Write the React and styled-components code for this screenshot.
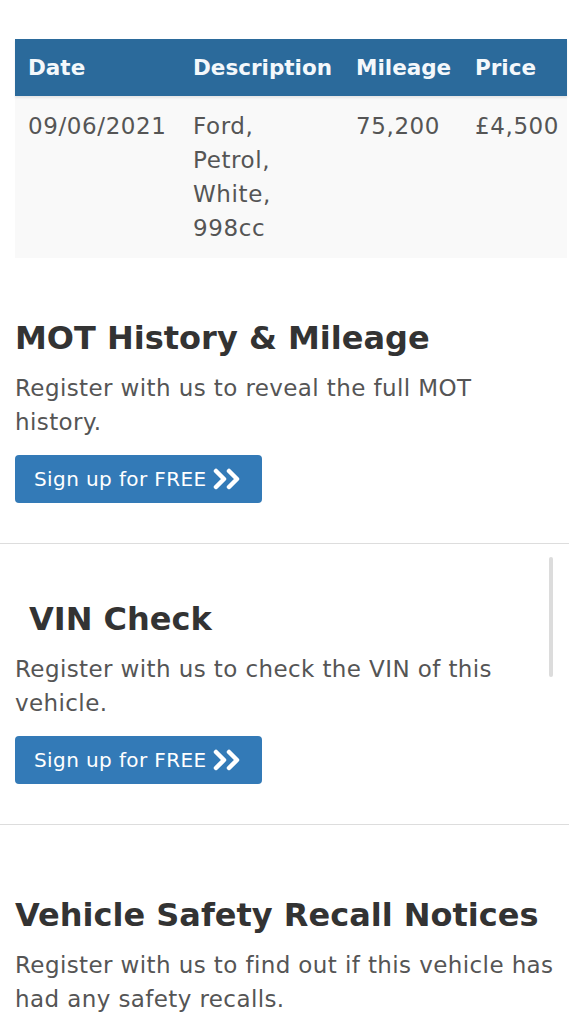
import React from "react";
import styled, { createGlobalStyle } from "styled-components";

const GlobalStyle = createGlobalStyle`
  html, body {
    margin: 0;
    padding: 0;
    background: #ffffff;
  }
  body {
    font-family: "DejaVu Sans", "Open Sans", sans-serif;
    color: #555555;
  }
`;

const sections = [
  {
    title: "MOT History & Mileage",
    text: "Register with us to reveal the full MOT history.",
    top: 62,
    button: true,
  },
  {
    title: "VIN Check",
    text: "Register with us to check the VIN of this vehicle.",
    top: 57,
    indent: 14,
    button: true,
    scroll: true,
  },
  {
    title: "Vehicle Safety Recall Notices",
    text: "Register with us to find out if this vehicle has had any safety recalls.",
    top: 72,
  },
];

const DoubleChevron = () => (
  <svg width="32" height="22" viewBox="0 0 32 22" aria-hidden="true">
    <path d="M4 3 L12 11 L4 19" fill="none" stroke="#fff" strokeWidth="4.5" strokeLinejoin="round" strokeLinecap="round" />
    <path d="M17 3 L25 11 L17 19" fill="none" stroke="#fff" strokeWidth="4.5" strokeLinejoin="round" strokeLinecap="round" />
  </svg>
);

const App = () => {
  return (
    <React.Fragment>
      <GlobalStyle />
      <Page>
        <Table>
          <HeadRow>
            <HeadCell>Date</HeadCell>
            <HeadCell>Description</HeadCell>
            <HeadCell>Mileage</HeadCell>
            <HeadCell>Price</HeadCell>
          </HeadRow>
          <BodyRow>
            <Cell>09/06/2021</Cell>
            <Cell>
              Ford,
              <br />
              Petrol,
              <br />
              White,
              <br />
              998cc
            </Cell>
            <Cell>75,200</Cell>
            <Cell>£4,500</Cell>
          </BodyRow>
        </Table>

        {sections.map((s, i) => (
          <Section key={s.title} $last={i === sections.length - 1}>
            {s.scroll && <ScrollBar />}
            <Title $top={s.top} $indent={s.indent || 0}>
              {s.title}
            </Title>
            <Text>{s.text}</Text>
            {s.button && (
              <SignUp>
                <span>Sign up for FREE</span>
                <DoubleChevron />
              </SignUp>
            )}
          </Section>
        ))}
      </Page>
    </React.Fragment>
  );
};

export default App;

const Page = styled.div`
  padding-top: 39px;
  width: 569px;
  overflow: hidden;
`;

const Table = styled.div`
  margin-left: 15px;
  width: 552px;
`;

const Row = styled.div`
  display: grid;
  grid-template-columns: 165px 163px 119px 1fr;
  padding: 0 0 0 13px;
`;

const HeadRow = styled(Row)`
  height: 57px;
  align-items: center;
  background-color: #2b6a9b;
  box-shadow: 0 2px 2px rgba(0, 0, 0, 0.08);
  position: relative;
`;

const HeadCell = styled.div`
  font-size: 21.5px;
  font-weight: bold;
  color: #f4f8fb;
  white-space: nowrap;
`;

const BodyRow = styled(Row)`
  background-color: #f9f9f9;
  padding-top: 13px;
  padding-bottom: 13px;
`;

const Cell = styled.div`
  font-size: 23px;
  letter-spacing: 0.6px;
  line-height: 34px;
  color: #555555;
  white-space: nowrap;
`;

const Section = styled.div`
  position: relative;
  padding: 0 15px;
  padding-bottom: ${(p) => (p.$last ? "0" : "40px")};
  border-bottom: ${(p) => (p.$last ? "none" : "1px solid #dddddd")};
`;

const ScrollBar = styled.div`
  position: absolute;
  right: 16px;
  top: 13px;
  width: 4px;
  height: 120px;
  border-radius: 2px;
  background-color: #dcdcdc;
`;

const Title = styled.h2`
  margin: 0;
  padding-top: ${(p) => p.$top}px;
  padding-left: ${(p) => p.$indent}px;
  font-size: 32px;
  line-height: 36px;
  font-weight: bold;
  color: #333333;
`;

const Text = styled.p`
  margin: 15px 0 0 0;
  font-size: 23px;
  letter-spacing: 0.4px;
  line-height: 34px;
  color: #555555;
`;

const SignUp = styled.button`
  display: flex;
  align-items: center;
  gap: 5px;
  margin-top: 16px;
  width: 247px;
  height: 48px;
  padding: 0 0 0 19px;
  border: none;
  border-radius: 4px;
  background-color: #337ab7;
  color: #ffffff;
  font-family: inherit;
  font-size: 20px;
  letter-spacing: 0.4px;
  cursor: pointer;
`;
